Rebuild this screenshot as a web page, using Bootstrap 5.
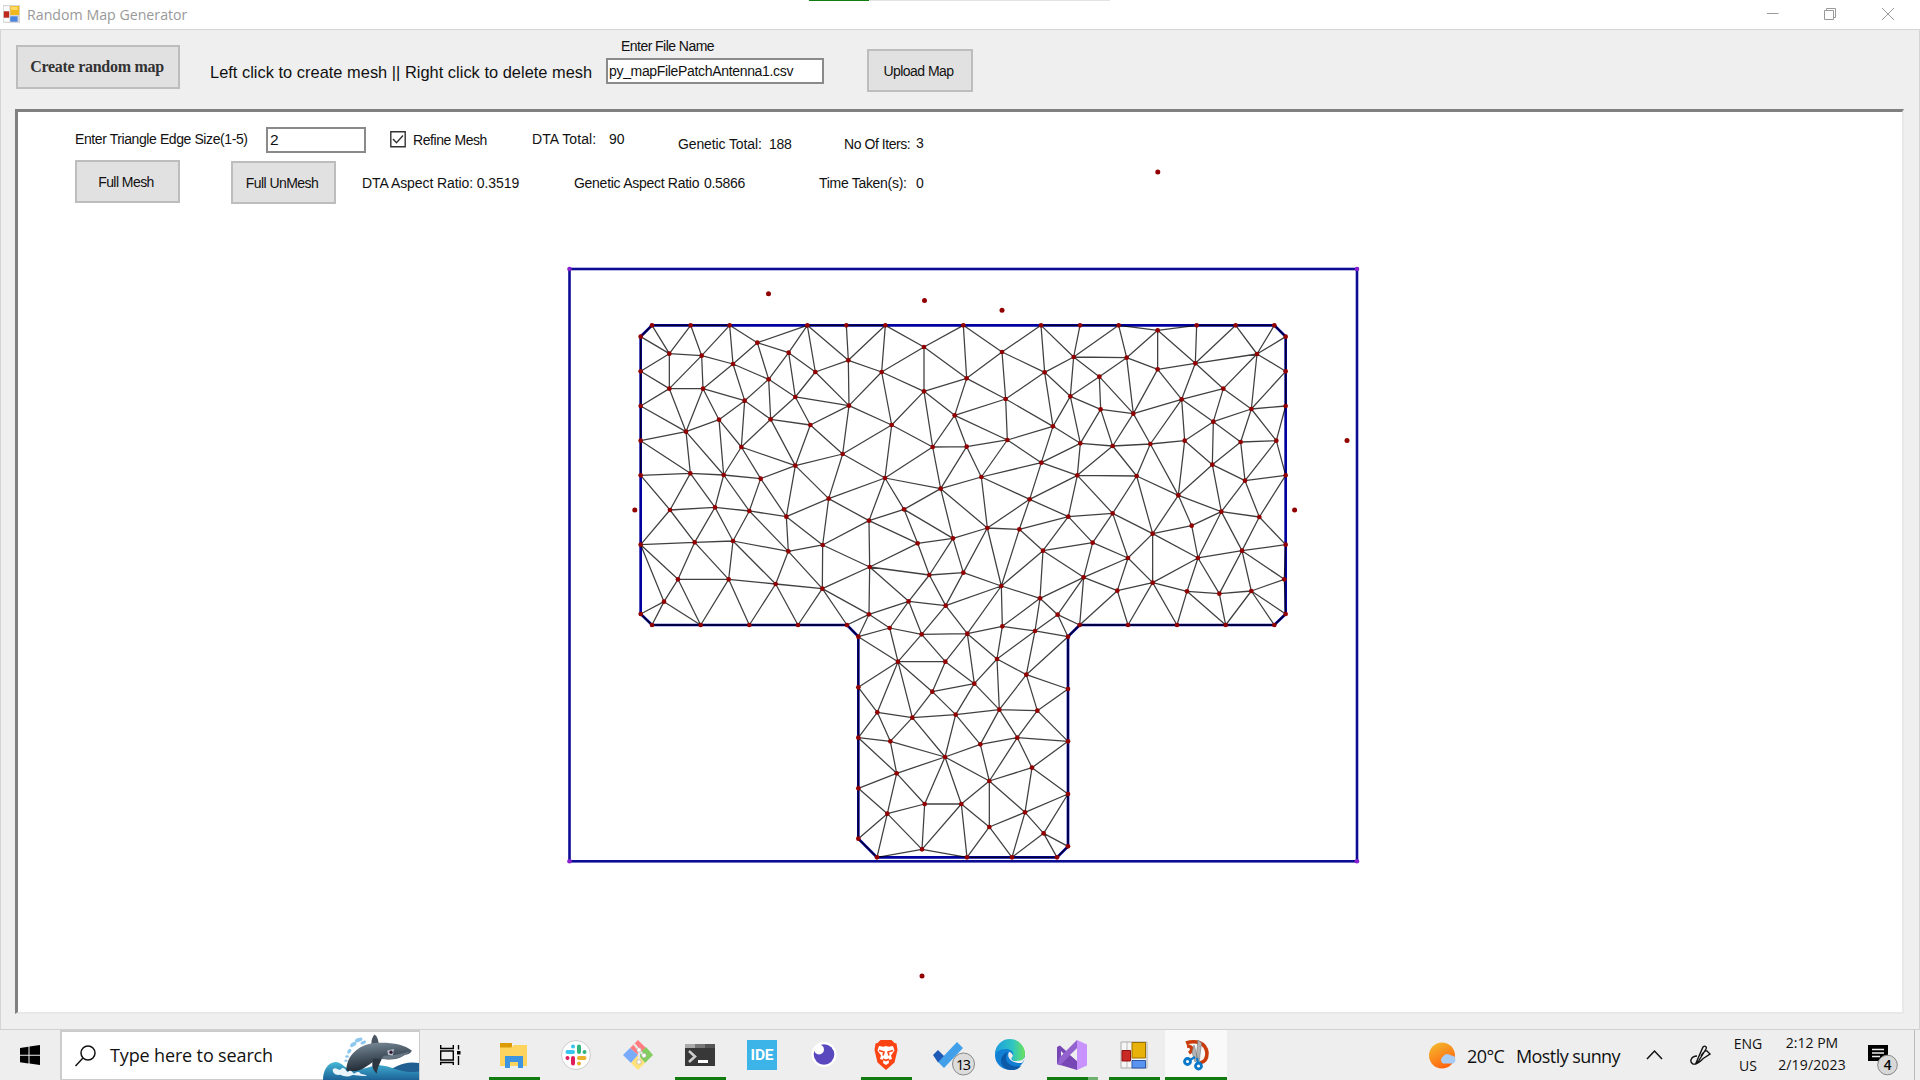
<!DOCTYPE html>
<html lang="en">
<head>
<meta charset="utf-8">
<title>Random Map Generator</title>
<link href="https://cdn.jsdelivr.net/npm/bootstrap@5.3.0/dist/css/bootstrap.min.css" rel="stylesheet">
<style>
html,body{width:1920px;height:1080px;overflow:hidden;background:#fff}
body{font-family:"Liberation Sans",Arial,sans-serif;font-size:14px;line-height:16px;color:#111}
svg{display:block;flex:none}
.title-bar{height:29px;background:#fff;font:14.2px/24px "Open Sans",sans-serif;color:#999}
.win-controls{gap:46px;padding:8px 26px 0 0}
.progress-line{top:0;left:809px;width:301px;height:1px;background:#e3e3e3}
.progress-line i{display:block;width:60px;height:1px;background:#107c10}
.form-body{height:1001px;background:#efefef;border:1px solid #d4d4d4;border-bottom-color:#d0d0d0}
.tool-row{height:79px;padding-left:15px}
.win-btn{border:2px solid #bdbdbd;background:#e1e1e1;color:#111;border-radius:0;padding:0 3px 0 0;font-size:14px;line-height:16px;height:43px;width:105px;letter-spacing:-.55px;flex:none}
.create-btn{width:164px;height:44px;font:bold 16px/20px "Liberation Serif",serif;letter-spacing:-.28px;margin-top:15px;color:#333;padding:0 2px 0 0}
.win-input{border:2px solid #8a8a8a;border-radius:0;padding:0 2px;background:#fff;color:#111;height:26px;width:100px;font-size:15.5px;line-height:20px}
.file-input{width:218px;height:26px;font-size:14px;letter-spacing:-.33px;padding:0 1px}
.hint{font-size:16.4px;line-height:20px;width:383px;margin:32px 13px 0 30px;letter-spacing:.02px;white-space:nowrap}
.lbl{white-space:nowrap;flex:none}
.map-panel{height:905px;margin:0 15px 0 14px;background:#fff;border:2px solid #808080;border-width:3px 2px 2px 3px;border-right-color:#e8e8e8;border-bottom-color:#e8e8e8}
.row-a{height:48px;padding:14px 0 0 57px}
.row-b{height:46px;padding-left:57px}
.map-canvas{left:-18px;top:-112px;pointer-events:none}
.task-bar{height:50px;background:#eee;font-family:"Open Sans",sans-serif;color:#111}
.start{width:60px;padding:15px 0 0 20px}
.search-box{width:360px;height:50px;background:#fff;border:2px solid #ccc;border-right-width:1px;border-bottom-width:1px;font-size:18px;letter-spacing:-.14px}
.slot{width:62px;height:50px;position:relative;flex:none}
.slot.open::after{content:"";position:absolute;left:6px;bottom:0;width:51px;height:3px;background:#107c10}
.slot.now{background:#f9f9f9}
.slot.now::after{left:0;width:62px}
.slot.multi::after{background:linear-gradient(90deg,#107c10 41px,#70b070 41px)}
.weather{font-size:18px;letter-spacing:-.58px}
.clock{font-size:14px;line-height:22px}
.edge-line{width:6px;border-left:1px solid #bbb}
</style>
<script src="https://cdn.jsdelivr.net/npm/bootstrap@5.3.0/dist/js/bootstrap.bundle.min.js"></script>
</head>
<body class="d-flex flex-column position-relative">
<header class="title-bar d-flex">
 <svg style="margin:5px 0 0 3px" width="17" height="18" viewBox="0 0 42 54" preserveAspectRatio="none"><path d="M0 0h42v54H0z" fill="#d6d6d6"/><path d="M2 4h14v14H2zM2 38h14v12H2z" fill="#fbfbfb"/><path d="M2 19h13v19H2z" fill="#c0281c"/><path d="M18 3h22v27H18z" fill="#f0b81c"/><path d="M20 5h16v10H20z" fill="#ffdc6a"/><path d="M18 34h18v16H18z" fill="#4a86e0"/></svg>
 <span style="margin-left:7px;margin-top:3px">Random Map Generator</span>
 <div class="win-controls d-flex ms-auto">
  <svg width="12" height="12"><path d="M-.5 5.500h12" stroke="#999"/></svg>
  <svg width="13" height="12" fill="none" stroke="#999" style="margin-right:-1px;margin-left:-1px"><path d="M.5 2.500h9v9h-9zM2.500 2V.5h9v9H10"/></svg>
  <svg width="12" height="12" stroke="#999"><path d="M0 0l12 12M12 0L0 12"/></svg>
 </div>
</header>
<div class="progress-line position-absolute"><i></i></div>

<main class="form-body flex-shrink-0">
 <div class="tool-row d-flex align-items-start">
  <button class="btn win-btn create-btn">Create random map</button>
  <div class="hint">Left click to create mesh || Right click to delete mesh</div>
  <div style="width:218px;padding-top:8px">
   <div class="lbl" style="margin-left:15px;letter-spacing:-.54px">Enter File Name</div>
   <input class="form-control win-input file-input" style="margin-top:4px" value="py_mapFilePatchAntenna1.csv">
  </div>
  <button class="btn win-btn" style="margin:19px 0 0 43px;width:106px">Upload Map</button>
 </div>
 <section class="map-panel position-relative">
  <svg class="map-canvas position-absolute" width="1900" height="1010">
   <rect x="569.500" y="269" width="787.500" height="592.300" fill="none" stroke="#0c0c94" stroke-width="2.600"/>
   <g id="mesh" transform="translate(620 310) scale(.33333)"></g>
   <g id="pins" fill="#920000"></g>
   <g fill="#8420d0"><circle cx="569.500" cy="269" r="2.300"/><circle cx="1357" cy="269" r="2.300"/><circle cx="569.500" cy="861.300" r="2.300"/><circle cx="1357" cy="861.300" r="2.300"/></g>
  </svg>
  <div class="row-a d-flex align-items-start position-relative">
   <span class="lbl" style="width:173px;letter-spacing:-.41px;margin-top:5px">Enter Triangle Edge Size(1-5)</span>
   <input class="form-control win-input" style="margin:1px 0 0 18px" value="2">
   <svg style="margin:5px 0 0 24px" width="16" height="17"><path d="M.8.800h14.400v15H.8z" fill="#fff" stroke="#333" stroke-width="1.400"/><path d="M3 8l3.500 3.700L13 4.500" fill="none" stroke="#333" stroke-width="1.400"/></svg>
   <span class="lbl" style="width:74px;letter-spacing:-.42px;margin:6px 0 0 7px">Refine Mesh</span>
   <span class="lbl" style="width:65px;letter-spacing:.1px;margin:5px 0 0 45px">DTA Total:</span>
   <span class="lbl" style="width:16px;margin:5px 0 0 12px">90</span>
   <span class="lbl" style="width:84px;letter-spacing:-.12px;margin:10px 0 0 53px">Genetic Total:</span>
   <span class="lbl" style="width:22px;letter-spacing:-.3px;margin:10px 0 0 7px">188</span>
   <span class="lbl" style="width:66px;letter-spacing:-.44px;margin:10px 0 0 53px">No Of Iters:</span>
   <span class="lbl" style="margin:9px 0 0 6px">3</span>
  </div>
  <div class="row-b d-flex align-items-start position-relative">
   <button class="btn win-btn">Full Mesh</button>
   <button class="btn win-btn" style="margin:1px 0 0 51px">Full UnMesh</button>
   <span class="lbl" style="width:158px;letter-spacing:-.09px;margin:15px 0 0 26px">DTA Aspect Ratio: 0.3519</span>
   <span class="lbl" style="width:126px;letter-spacing:-.28px;margin:15px 0 0 54px">Genetic Aspect Ratio</span>
   <span class="lbl" style="width:41px;letter-spacing:-.3px;margin:15px 0 0 4px">0.5866</span>
   <span class="lbl" style="width:88px;letter-spacing:-.3px;margin:15px 0 0 74px">Time Taken(s):</span>
   <span class="lbl" style="margin:15px 0 0 9px">0</span>
  </div>
 </section>
</main>

<footer class="task-bar d-flex flex-shrink-0">
 <div class="start"><svg width="20" height="20"><path d="M0 3l8.500-1.300v8H0zM9.500 1.500L20 0v9.700H9.500zM0 10.700h8.500v7.800L0 17.200zM9.500 10.700H20V20L9.500 18.600z" fill="#000"/></svg></div>
 <div class="search-box d-flex">
  <svg style="margin:13px 13px 0 13px" width="22" height="22" fill="none" stroke="#111" stroke-width="1.500"><circle cx="13" cy="8" r="7"/><path d="M8 13l-7.500 8"/></svg>
  <span class="lbl" style="line-height:47px">Type here to search</span>
  <svg class="ms-auto" width="105" height="48" viewBox="0 9 315 147" preserveAspectRatio="none">
   <defs><linearGradient id="sea" x2="0" y2="1"><stop stop-color="#45b8d8"/><stop offset="1" stop-color="#1c6296"/></linearGradient><linearGradient id="orca" x2=".3" y2="1"><stop stop-color="#8293a1"/><stop offset=".5" stop-color="#4b5966"/><stop offset="1" stop-color="#1d2630"/></linearGradient></defs>
   <path d="M215 128c30-8 50-32 100-24v34h-100z" fill="#215f93"/>
   <path d="M27 156c0-30 14-52 36-55 25 0 25 22 55 23 42 0 50-12 75-14 50 4 62 28 122 20v26z" fill="url(#sea)"/>
   <path d="M172 46c0-14 4-24 10-29 8 7 11 16 12 28z" fill="#4a5763"/>
   <path d="M97 128c0-50 42-86 98-86 40-1 78 6 98 24 0 7-10 12-24 14-13 12-35 15-66 12-22 4-32 14-45 22-18 14-35 18-61 14z" fill="url(#orca)"/>
   <path d="M202 91c45 4 60-2 91-25-22 10-50 14-84 16z" fill="#687684"/>
   <path d="M178 90c-6 18-4 34 10 46 2-16 8-27 15-44z" fill="#2b3640"/>
   <path d="M220 66l20-5-4 20-14-2z" fill="#b9c0cc"/><circle cx="231" cy="71" r="5" fill="#351c30"/>
   <path d="M56 124c10-10 15 4 24 0 10-13 15 4 22 8 8-10 12 0 18 5 10-8 17-6 20 0l20 5c-18 6-36-4-48 0-10 6-24 2-34-2-15 2-22-6-22-16z" fill="#e9f4fa"/>
   <g fill="#8fc8ec"><ellipse cx="134" cy="33" rx="12" ry="6" transform="rotate(-20 134 33)"/><ellipse cx="118" cy="47" rx="11" ry="6" transform="rotate(-35 118 47)"/><ellipse cx="148" cy="41" rx="9" ry="5" transform="rotate(-25 148 41)"/><ellipse cx="106" cy="68" rx="8" ry="5" transform="rotate(-55 106 68)"/><ellipse cx="99" cy="84" rx="6" ry="4"/><ellipse cx="96" cy="97" rx="5" ry="4"/></g>
  </svg>
 </div>
 <div style="width:63px"><svg style="margin:15px 0 0 20px" width="21" height="21" fill="none" stroke="#000" stroke-width="1.400"><path d="M.7 0v3.500h12.600V0M.7 6h12.600v9H.7zM.7 20v-2.500h12.600V20M18.500 0v4.500M18.500 11v9"/><path d="M17 6h3.500v3.500H17z" fill="#000" stroke="none"/></svg></div>
 <div class="slot open"><svg width="62" height="50"><path d="M17 13h12v5H17z" fill="#dc9a06"/><path d="M17 17.500h11l3-2.500h13v21H17z" fill="#ffd45e"/><path d="M22 38V26h18v12h-5v-6h-8v6z" fill="#3d95df"/></svg></div>
 <div class="slot"><svg width="62" height="50"><circle cx="31" cy="25" r="14.500" fill="#fff" stroke="#ccc"/><g stroke-width="4" stroke-linecap="round"><path d="M22.500 22H28M28 16.500v.01" stroke="#36c5f0"/><path d="M34 16.500V22M39.500 22v.01" stroke="#2eb67d"/><path d="M34 28h5.500M34 33.500v.01" stroke="#ecb22e"/><path d="M28 28v5.500M22.500 28v.01" stroke="#e01e5a"/></g></svg></div>
 <div class="slot"><svg width="62" height="50"><path d="M31 10l8 8-8 7-8-7z" fill="#ff7d80"/><path d="M23 18l8 7-7 8-8-8z" fill="#7aaafa"/><path d="M39 17l7 8-8 8-7-8z" fill="#83cc60"/><path d="M31 25l7 8-7 7-7-7z" fill="#ffe27a"/><path d="M27 14l5 6v12M32 20l5 6" stroke="#e9e9e9" stroke-width="2.200" fill="none"/><g fill="#fff" stroke="#aaa" stroke-width=".6"><circle cx="32" cy="20" r="2.200"/><circle cx="37" cy="25.500" r="2.200"/><circle cx="32" cy="32" r="2.200"/></g></svg></div>
 <div class="slot open"><svg width="62" height="50"><path d="M16 14h30v22H16z" fill="#383838"/><path d="M16 14h10v4H16z" fill="#aaa"/><path d="M26 14h10v4H26z" fill="#777"/><path d="M36 14h10v4H36z" fill="#555"/><path d="M20 21l6 5.500-6 5.500" fill="none" stroke="#ccc" stroke-width="2.600"/><path d="M29 30h10v3H29z" fill="#fff"/></svg></div>
 <div class="slot"><svg width="62" height="50"><path d="M16 10h30v30H16z" fill="#3cb4e7"/><text x="31" y="30" text-anchor="middle" textLength="23" fill="#fff" font-family="Roboto,sans-serif" font-weight="700" font-size="15.500">IDE</text></svg></div>
 <div class="slot"><svg width="62" height="50"><circle cx="31" cy="24.500" r="12.500" fill="#fff"/><circle cx="31" cy="24.500" r="10.300" fill="#5849be"/><circle cx="26" cy="19.500" r="5" fill="#fff"/></svg></div>
 <div class="slot open"><svg width="62" height="50"><path d="M25.500 10h11l3 3 2 .5 1 6.500-3 12.500L31 40l-8.500-7.500L19.500 20l1-6.500 2-.5z" fill="#fb4314"/><path d="M24 16l4.500.700L31 16l2.500.700L38 16l1.500 4.500-3.500 5 1 3.500-3.500 1 .5 3-3 2-3-2 .5-3-3.500-1 1-3.500-3.500-5z" fill="#fff"/><path d="M24 20.500l5 1.500-1 3.500M38 20.500l-5 1.500 1 3.500M28 29l3 1.500 3-1.500" fill="none" stroke="#fb4314" stroke-width="1.600"/></svg></div>
 <div class="slot"><svg width="62" height="50"><path d="M21 32L40 12l6 6-19 20z" fill="#42a0ea"/><path d="M16 25l5-5 6 6-6 6.500z" fill="#1d59b5"/><circle cx="46.500" cy="34" r="11" fill="#dcdcdc" stroke="#888"/><text x="46.500" y="39.500" text-anchor="middle" font-family="Open Sans,sans-serif" font-size="14.500" fill="#000" textLength="15">13</text></svg></div>
 <div class="slot"><svg width="62" height="50"><defs><linearGradient id="edg" x2="1"><stop stop-color="#1b9de0"/><stop offset=".6" stop-color="#30c6c0"/><stop offset="1" stop-color="#6ce25a"/></linearGradient></defs><circle cx="31" cy="25" r="15" fill="#117fd4"/><path d="M16 24a15 15 0 0 1 30 0c0 6-5 8-9 7-4 0-5-3-3-5 1-4-2-7-7-7-6 0-10 3-11 5z" fill="url(#edg)"/><path d="M29 22c-6 9 2 16 13 14-3 4-7 4-11 4-10-1-13-14-2-18z" fill="#0d5ba8"/><path d="M30 22c-3 6 3 12 13 11l3-4v-2c-2 3-5 4-9 4-4 0-6-2-3-5-.5-2-2-4-4-4z" fill="#eee"/></svg></div>
 <div class="slot open multi"><svg width="62" height="50"><path d="M16 17l3-1.500 21 19-4 5.500L16 34z" fill="#7747b5"/><path d="M20 21v9l4-5z" fill="#eee"/><path d="M16 34l3 1.500L38 16l-2-6-17 17z" fill="#9462cf"/><path d="M36 10l10 4.500v21L36 40z" fill="#c893ff"/><path d="M36 19l-7 6 7 6z" fill="#eee"/></svg></div>
 <div class="slot open"><svg width="62" height="50"><path d="M18 12h26v26H18z" fill="#f6f6f6" stroke="#aaa"/><path d="M18 29h11M24 12v26" stroke="#bbb"/><path d="M19 20.500h8.500V31H19z" fill="#c92a24" stroke="#901010"/><path d="M29 12.500h13.500V28H29z" fill="#e9b20b" stroke="#997000"/><path d="M29 30.500h13.500v7.500H29z" fill="#5a94ee" stroke="#2c56a8"/></svg></div>
 <div class="slot open now"><svg width="62" height="50"><path d="M21 13c9-3 20-1 21 10 0 5-2 9-7 10M22 16c5 0 7 4 2 7" fill="none" stroke="#cb3c0c" stroke-width="3.600"/><path d="M33 10l3.500 3L34 33l-3-3zM29 15l4 14-3 3-3-10z" fill="#b4b4b4" stroke="#777" stroke-width=".6"/><g fill="none" stroke="#0878c9" stroke-width="2.800"><circle cx="22.500" cy="31.500" r="3"/><circle cx="33.500" cy="36" r="3"/><path d="M25 30l5-3M33 33l-1-5" stroke-width="2.200"/></g></svg></div>
 <div class="d-flex ms-auto">
  <svg style="margin:12px 10px 0 0" width="28" height="27"><defs><linearGradient id="sun" x2=".5" y2="1"><stop stop-color="#f3c030"/><stop offset="1" stop-color="#ff6510"/></linearGradient></defs><circle cx="13" cy="13.500" r="13" fill="url(#sun)"/><path d="M14 21.500a4 4 0 0 1 0-7 5 5 0 0 1 8-1 4.200 4.200 0 0 1 2 8z" fill="#a9cdf5"/></svg>
  <span class="weather lbl" style="line-height:52px;width:49px">20°C</span>
  <span class="weather lbl" style="line-height:52px;width:130px">Mostly sunny</span>
  <svg style="margin-top:19px" width="17" height="12"><path d="M1 10l7.500-8L16 10" fill="none" stroke="#111" stroke-width="1.500"/></svg>
  <svg style="margin:15px 0 0 27px" width="21" height="21" fill="none" stroke="#111" stroke-width="1.400"><path d="M6 18L13 2c2-2 4 0 3 2L8 17zM7 11c-6 0-8 6-4 8 5 1 8-4 11-6l6-4-3-3c-2-1-5 3-6 5"/></svg>
  <div class="clock text-center" style="margin:3px 0 0 21px;width:32px">ENG<br>US</div>
  <div class="clock text-center" style="margin:2px 0 0 12px;width:72px">2:12 PM<br><span style="letter-spacing:.15px">2/19/2023</span></div>
  <svg style="margin:15px 14px 0 20px" width="32" height="32"><path d="M0 0h20v16h-6l-4 4v-4H0z" fill="#000"/><path d="M4 4.500h12M4 8h12M4 11.500h8" stroke="#eee" stroke-width="1.300"/><circle cx="19.500" cy="20" r="9.800" fill="#d8d8d8" stroke="#888"/><text x="19.500" y="25" text-anchor="middle" font-family="Open Sans,sans-serif" font-size="13.500" font-weight="600">4</text></svg>
  <div class="edge-line"></div>
 </div>
</footer>

<script>
// Mesh vertices, in thirds of a pixel
const raw=`96,46 212,46 329,46 562,46 679,46 796,46 1030,46 62,80 148,131 245,137 339,162 412,98 506,128 586,186 685,151 785,186 912,111 1040,205
62,184 148,236 249,236 374,272 446,208 526,261 687,287 912,244 1004,316 62,288 198,365 297,329 364,411 452,328 571,345 668,432 815,345 938,411 1040,410
62,392 62,496 211,490 311,495 422,506 526,467 626,566 795,504 962,536 150,600 285,592 388,603 499,620 747,632 852,598 893,700 999,685
62,704 224,697 339,693 505,724 608,705 749,771 928,795 1030,788 174,808 326,808 467,822 607,836 866,874 977,887
132,875 62,912 96,945 242,945 388,945 534,945 681,945 747,913 715,980 809,954 905,973 1042,971
1263,46 1380,46 1496,46 1613,61 1730,46 1847,46 1963,46 1997,80 1146,126 1274,187 1361,141 1520,143 1438,200 1613,178 1726,160 1911,132 1997,184
1157,267 1351,259 1442,298 1540,311 1685,268 1810,236 1894,297 1997,288 1299,349 1162,390 1381,400 1478,408 1591,402 1694,392 1780,335 1862,396 1969,392
1084,501 1264,458 1372,496 1550,498 1777,464 1875,512 1997,496 1229,568 1675,556 1804,605 1918,621 1345,620 1478,610
1102,654 1198,658 1598,671 1715,647 1269,722 1418,698 1524,744 1734,744 1866,722 1997,704 1391,802 1144,828 1492,842 1598,818 1701,844 1798,851 1894,843 1993,808
1260,865 1313,914 1379,945 1524,945 1671,945 1817,945 1963,945 1997,912 1344,980 1147,949 1245,963
834,1055 976,1055 1063,1121 937,1145 1131,1047 1219,1094 715,1132 1344,1137 772,1207 877,1223 1007,1214 1138,1199 1252,1202 715,1283 811,1294 1081,1303 1192,1283 1344,1294
975,1341 830,1390 1108,1413 1236,1373 715,1435 1344,1452 802,1511 914,1482 1024,1482 1108,1551 1215,1507 1271,1570 715,1586 771,1642 906,1618 1041,1642 1176,1642 1311,1642 1344,1609`;
const pts=raw.split(/\s+/).map(p=>p.split(',').map(Number));
const outline=[[96,46],[1963,46],[1997,80],[1997,912],[1963,945],[1379,945],[1344,980],[1344,1609],[1311,1642],[771,1642],[715,1586],[715,980],[681,945],[96,945],[62,912],[62,80]];

// Delaunay triangulation (Bowyer-Watson)
function triangulate(points){
  const n=points.length,all=points.concat([[-60000,-50000],[61000,-50500],[900,90000]]);
  const circ=(a,b,c)=>{
    const [ax,ay]=all[a],[bx,by]=all[b],[cx,cy]=all[c];
    const d=2*(ax*(by-cy)+bx*(cy-ay)+cx*(ay-by));
    if(Math.abs(d)<1e-9)return {v:[a,b,c],x:0,y:0,r:Infinity};
    const A=ax*ax+ay*ay,B=bx*bx+by*by,C=cx*cx+cy*cy;
    const x=(A*(by-cy)+B*(cy-ay)+C*(ay-by))/d,y=(A*(cx-bx)+B*(ax-cx)+C*(bx-ax))/d;
    return {v:[a,b,c],x,y,r:(ax-x)**2+(ay-y)**2};
  };
  let tris=[circ(n,n+1,n+2)];
  for(let i=0;i<n;i++){
    const edges=new Map(),keep=[];
    for(const t of tris){
      if((all[i][0]-t.x)**2+(all[i][1]-t.y)**2<t.r){
        for(const [a,b] of [[0,1],[1,2],[2,0]]){
          const e=[t.v[a],t.v[b]].sort((p,q)=>p-q),k=e.join();
          edges.has(k)?edges.delete(k):edges.set(k,e);
        }
      }else keep.push(t);
    }
    for(const e of edges.values())keep.push(circ(e[0],e[1],i));
    tris=keep;
  }
  return tris.map(t=>t.v).filter(v=>v.every(i=>i<n));
}
function inside(x,y){
  let r=false;
  for(let i=0,j=outline.length-1;i<outline.length;j=i++){
    const [xi,yi]=outline[i],[xj,yj]=outline[j];
    if((yi>y)!==(yj>y)&&x<(xj-xi)*(y-yi)/(yj-yi)+xi)r=!r;
  }
  return r;
}
// tiny jitter keeps collinear border points from being degenerate
const work=pts.map(([x,y],i)=>[x+Math.sin(i*7)*.01,y+Math.cos(i*5)*.01]);
const seen=new Set();let d='';
for(const t of triangulate(work)){
  const cx=t.reduce((s,i)=>s+pts[i][0],0)/3,cy=t.reduce((s,i)=>s+pts[i][1],0)/3;
  if(!inside(cx,cy))continue;
  for(const [a,b] of [[0,1],[1,2],[2,0]]){
    const e=[t[a],t[b]].sort((p,q)=>p-q),k=e.join();
    if(seen.has(k))continue;
    seen.add(k);
    const [p,q]=[pts[e[0]],pts[e[1]]];
    const straight=p[0]===q[0]||p[1]===q[1];
    const border=straight&&!(inside((p[0]+q[0])/2+2,(p[1]+q[1])/2+2)&&inside((p[0]+q[0])/2-2,(p[1]+q[1])/2-2));
    if(border&&Math.hypot(p[0]-q[0],p[1]-q[1])>200)continue;
    d+=`M${p}L${q}`;
  }
}
document.getElementById('mesh').innerHTML=
  `<path d="M${outline.join('L')}Z" fill="none" stroke="#0000a0" stroke-width="8"/><path d="${d}" fill="none" stroke="#000" stroke-opacity=".75" stroke-width="3.800"/>`+
  pts.map(([x,y])=>`<circle cx="${x}" cy="${y}" r="7" fill="#920000"/>`).join('');
document.getElementById('pins').innerHTML=
  [[768.5,293.7],[924.5,300.5],[1002,310.3],[1157.8,172],[1347,440.5],[634.8,510],[1294.6,510],[922,976]]
  .map(([x,y])=>`<circle cx="${x}" cy="${y}" r="2.500"/>`).join('');
</script>
</body>
</html>
